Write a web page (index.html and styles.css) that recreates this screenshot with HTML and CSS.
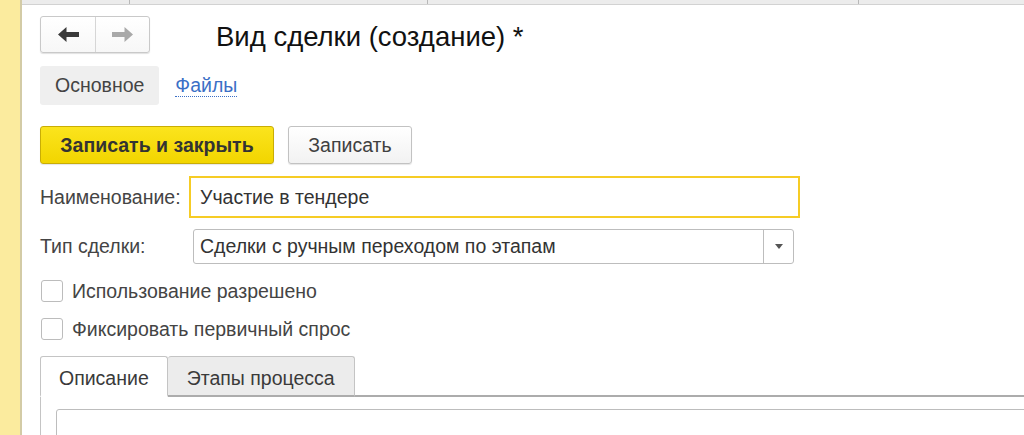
FILE: index.html
```html
<!DOCTYPE html>
<html lang="ru">
<head>
<meta charset="utf-8">
<title>Вид сделки (создание)</title>
<link rel="stylesheet" href="styles.css">
</head>
<body>
<div class="app">
  <div class="strip"></div>
  <div class="main">
    <div class="wintabs">
      <div class="wt wt1"></div>
      <div class="wt wt2"></div>
      <div class="wt wt3"></div>
      <div class="wt wt4"></div>
    </div>
    <div class="content">
      <div class="header">
        <div class="nav">
          <button class="navbtn">
            <svg width="21" height="15" viewBox="0 0 21 15"><path d="M0 7.5 L8.5 0 L8.5 5 L21 5 L21 10 L8.5 10 L8.5 15 Z" fill="#3a3a3a"/></svg>
          </button>
          <button class="navbtn">
            <svg width="21" height="15" viewBox="0 0 21 15"><path d="M21 7.5 L12.5 0 L12.5 5 L0 5 L0 10 L12.5 10 L12.5 15 Z" fill="#a9a9a9"/></svg>
          </button>
        </div>
        <h1 class="title">Вид сделки (создание) *</h1>
      </div>
      <div class="formtabs">
        <span class="ftab active">Основное</span>
        <span class="ftab link">Файлы</span>
      </div>
      <div class="actions">
        <button class="btn primary">Записать и закрыть</button>
        <button class="btn">Записать</button>
      </div>
      <div class="fields">
        <label class="lbl">Наименование:</label>
        <div class="input focused">Участие в тендере</div>
        <label class="lbl">Тип сделки:</label>
        <div class="select">
          <span class="sel-text">Сделки с ручным переходом по этапам</span>
          <span class="sel-btn"><svg width="8" height="5" viewBox="0 0 8 5"><path d="M0 0 L8 0 L4 5 Z" fill="#555"/></svg></span>
        </div>
      </div>
      <div class="checks">
        <label class="check"><span class="box"></span>Использование разрешено</label>
        <label class="check"><span class="box"></span>Фиксировать первичный спрос</label>
      </div>
      <div class="tabs">
        <span class="tab active">Описание</span>
        <span class="tab">Этапы процесса</span>
        <span class="tab-rest"></span>
      </div>
      <div class="panel">
        <div class="textarea"></div>
      </div>
    </div>
  </div>
</div>
</body>
</html>
```
FILE: styles.css
```css
* { box-sizing: border-box; }
html, body {
  margin: 0;
  padding: 0;
  height: 100%;
  overflow: hidden;
  background: #fff;
  font-family: "Liberation Sans", Arial, sans-serif;
  color: #404040;
}
.app {
  display: flex;
  height: 435px;
  overflow: hidden;
}
.strip {
  width: 22px;
  flex: none;
  background: #fbeb9e;
  border-right: 2px solid #d3cba6;
}
.main {
  flex: 1;
  min-width: 0;
  display: flex;
  flex-direction: column;
}
.wintabs {
  display: flex;
  height: 5px;
  background: #ececec;
  border-bottom: 1px solid #d2d2d2;
  flex: none;
}
.wt { border-right: 1px solid #b8b8b8; }
.wt1 { width: 108px; }
.wt2 { width: 298px; }
.wt3 { width: 431px; }
.wt4 { flex: 1; border-right: none; }
.content {
  padding: 11px 0 0 18px;
  display: flex;
  flex-direction: column;
}
.header {
  display: flex;
  align-items: center;
  height: 37px;
}
.nav {
  display: flex;
  border: 1px solid #c9c9c9;
  border-radius: 3px;
  box-shadow: 0 1px 1px rgba(0,0,0,0.12);
  background: linear-gradient(#ffffff, #f7f7f7);
}
.navbtn {
  width: 54px;
  height: 35px;
  border: none;
  background: transparent;
  padding: 0;
  display: flex;
  align-items: center;
  justify-content: center;
}
.navbtn + .navbtn { border-left: 1px solid #d6d6d6; }
.title {
  margin: 0 0 0 66px;
  font-weight: normal;
  font-size: 27.5px;
  color: #111;
  line-height: 37px;
  position: relative;
  top: 2px;
}
.formtabs {
  display: flex;
  align-items: center;
  margin-top: 13px;
  height: 39px;
  gap: 16px;
}
.ftab {
  font-size: 19.5px;
  line-height: 39px;
}
.ftab.active {
  background: #efefef;
  border-radius: 3px;
  padding: 0 15px;
  color: #444;
}
.ftab.link {
  color: #3b6fc6;
  line-height: 22px;
  border-bottom: 1px dotted #3b6fc6;
}
.actions {
  display: flex;
  gap: 14px;
  margin-top: 21px;
}
.btn {
  height: 38px;
  font-family: inherit;
  font-size: 19.5px;
  color: #404040;
  border: 1px solid #c2c2c2;
  border-radius: 3px;
  background: linear-gradient(#ffffff, #f2f2f2);
  box-shadow: 0 1px 1px rgba(0,0,0,0.1);
  padding: 0;
  width: 124px;
}
.btn.primary {
  width: 234px;
  font-weight: bold;
  color: #333;
  background: linear-gradient(#fbe41d, #f2d500);
  border-color: #c9ad05;
}
.fields {
  display: grid;
  grid-template-columns: 153px 601px;
  grid-template-rows: 42px 35px;
  row-gap: 11px;
  margin-top: 12px;
  align-items: center;
}
.lbl {
  font-size: 19.5px;
  color: #444;
}
.input {
  height: 42px;
  margin: 0 -6px 0 -4px;
  border: 2px solid #f6cc25;
  padding: 0 0 0 9px;
  font-size: 19.5px;
  color: #333;
  line-height: 38px;
}
.select {
  height: 35px;
  border: 1px solid #bdbdbd;
  border-radius: 3px;
  display: flex;
  font-size: 19.5px;
  color: #333;
}
.sel-text {
  flex: 1;
  line-height: 33px;
  padding-left: 6px;
}
.sel-btn {
  width: 30px;
  border-left: 1px solid #bdbdbd;
  display: flex;
  align-items: center;
  justify-content: center;
}
.checks {
  margin-top: 16px;
  display: flex;
  flex-direction: column;
  gap: 16px;
}
.check {
  display: flex;
  align-items: center;
  gap: 9px;
  font-size: 19.5px;
  color: #444;
  height: 22px;
}
.box {
  width: 22px;
  height: 22px;
  border: 1px solid #bcbcbc;
  border-radius: 3px;
  background: #fff;
  margin-left: 1px;
}
.tabs {
  display: flex;
  margin-top: 16px;
  align-items: flex-end;
  height: 41px;
}
.tab {
  height: 41px;
  font-size: 19.5px;
  line-height: 42px;
  color: #3a3a3a;
  padding: 0 19px;
  background: #ececec;
  border: 1px solid #c4c4c4;
  border-bottom: 2px solid #acacac;
  border-radius: 3px 3px 0 0;
}
.tab.active {
  padding: 0 18px;
  background: #fff;
  border-color: #c4c4c4;
  border-bottom: 2px solid #fff;
}
.tab + .tab { border-left: none; }
.tab-rest {
  flex: 1;
  border-bottom: 2px solid #acacac;
}
.panel {
  border-left: 1px solid #c4c4c4;
  padding: 12px 0 0 15px;
  height: 40px;
}
.textarea {
  height: 60px;
  margin-right: -10px;
  border: 1px solid #bdbdbd;
  border-radius: 3px;
}
```
